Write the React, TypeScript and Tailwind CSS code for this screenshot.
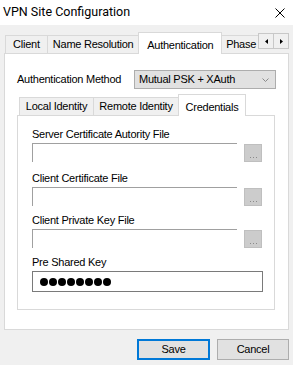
const font = { fontFamily: '"Liberation Sans", Arial, sans-serif' };

const Tab: React.FC<{ label: string; active?: boolean; width: string }> = ({ label, active, width }) => {
  if (active) {
    return (
      <div
        className={`${width} h-[22px] -mb-px -ml-px relative z-10 bg-white border border-b-0 border-[#d9d9d9] flex items-start justify-center pt-[4px] whitespace-nowrap`}
      >
        {label}
      </div>
    );
  }
  return (
    <div
      className={`${width} h-[18px] -ml-px bg-[#f0f0f0] border border-b-0 border-[#d9d9d9] flex items-center justify-center whitespace-nowrap`}
    >
      {label}
    </div>
  );
};

const FileRow: React.FC<{ label: string; className?: string }> = ({ label, className }) => (
  <div className={className}>
    <div className="h-[15px] leading-[15px]">{label}</div>
    <div className="flex items-center mt-px">
      <div className="w-[205px] h-[19px] bg-white border-t border-l border-[#a0a0a0]"></div>
      <div className="ml-[7px] w-[18px] h-[18px] bg-[#cccccc] border border-[#bfbfbf] flex items-end justify-center pb-[3px]">
        <div className="flex gap-[2px]">
          <span className="w-px h-px bg-[#8a8a8a]"></span>
          <span className="w-px h-px bg-[#8a8a8a]"></span>
          <span className="w-px h-px bg-[#8a8a8a]"></span>
        </div>
      </div>
    </div>
  </div>
);

export default function App() {
  return (
    <div
      className="w-[293px] h-[365px] bg-[#f0f0f0] text-black text-[11px] tracking-[-0.25px] overflow-hidden"
      style={font}
    >
      {/* title bar */}
      <div className="h-[25px] bg-white flex items-center justify-between pl-[3px] pr-[8px]">
        <span className="text-[12.5px] tracking-normal" style={{ fontFamily: 'Roboto, "Liberation Sans", sans-serif' }}>
          VPN Site Configuration
        </span>
        <svg width="10" height="10" viewBox="0 0 10 10" className="mt-[1px]">
          <path d="M0.5 0.5 L9.5 9.5 M9.5 0.5 L0.5 9.5" stroke="#000" strokeWidth="1" />
        </svg>
      </div>

      <div className="px-[4px] pt-[7px]">
        {/* outer tabs */}
        <div className="h-[21px] flex items-end pl-[2px]">
          <Tab label="Client" width="w-[43px]" />
          <Tab label="Name Resolution" width="w-[93px]" />
          <Tab label="Authentication" width="w-[84px]" active />
          <div className="w-[37px] h-[18px] -ml-px bg-[#f0f0f0] border-t border-l border-[#d9d9d9] whitespace-nowrap pl-[4px] flex items-center">
            Phase
          </div>
          <div className="self-start mt-[1px] flex">
            <div className="w-[16px] h-[16px] bg-[#f0f0f0] border border-[#c8c8c8] flex items-center justify-center">
              <svg width="3" height="5" viewBox="0 0 3 5">
                <path d="M3 0 L0 2.5 L3 5 Z" fill="#000" />
              </svg>
            </div>
            <div className="w-[16px] h-[16px] -ml-px bg-[#f0f0f0] border border-[#c8c8c8] flex items-center justify-center">
              <svg width="3" height="5" viewBox="0 0 3 5">
                <path d="M0 0 L3 2.5 L0 5 Z" fill="#000" />
              </svg>
            </div>
          </div>
        </div>

        {/* outer panel */}
        <div className="h-[277px] bg-white border border-[#d9d9d9] pt-[16px]">
          <div className="flex items-center pl-[12px]">
            <div className="w-[117px] whitespace-nowrap">Authentication Method</div>
            <div className="w-[142px] h-[19px] bg-[#e1e1e1] border border-[#adadad] flex items-center justify-between pl-[4px] pr-[6px]">
              <span>Mutual PSK + XAuth</span>
              <svg width="7" height="4" viewBox="0 0 7 4">
                <path d="M0.5 0.5 L3.5 3.5 L6.5 0.5" stroke="#8a8a8a" strokeWidth="1" fill="none" />
              </svg>
            </div>
          </div>

          {/* inner tabs */}
          <div className="ml-[12px] w-[258px] mt-[6px]">
            <div className="h-[20px] flex items-end pl-[3px]">
              <Tab label="Local Identity" width="w-[75px]" />
              <Tab label="Remote Identity" width="w-[86px]" />
              <Tab label="Credentials" width="w-[68px]" active />
            </div>
            <div className="h-[195px] bg-white border border-[#d9d9d9] pl-[14px] pt-[11px]">
              <FileRow label="Server Certificate Autority File" />
              <FileRow label="Client Certificate File" className="mt-[9px]" />
              <FileRow label="Client Private Key File" className="mt-[7px]" />
              <div className="mt-[7px]">
                <div className="h-[15px] leading-[15px]">Pre Shared Key</div>
                <div className="mt-px w-[231px] h-[21px] border border-[#7a7a7a] bg-white flex items-center gap-px pl-[7px]">
                  {[0, 1, 2, 3, 4, 5, 6, 7].map((i) => (
                    <span key={i} className="w-[8px] h-[8px] rounded-full bg-black"></span>
                  ))}
                </div>
              </div>
            </div>
          </div>
        </div>

        {/* buttons */}
        <div className="flex justify-end gap-[7px] mt-[9px]">
          <button className="w-[73px] h-[21px] bg-[#e1e1e1] border-2 border-[#0078d7] flex items-center justify-center">
            Save
          </button>
          <button className="w-[72px] h-[21px] bg-[#e1e1e1] border border-[#adadad] flex items-center justify-center">
            Cancel
          </button>
        </div>
      </div>
    </div>
  );
}
